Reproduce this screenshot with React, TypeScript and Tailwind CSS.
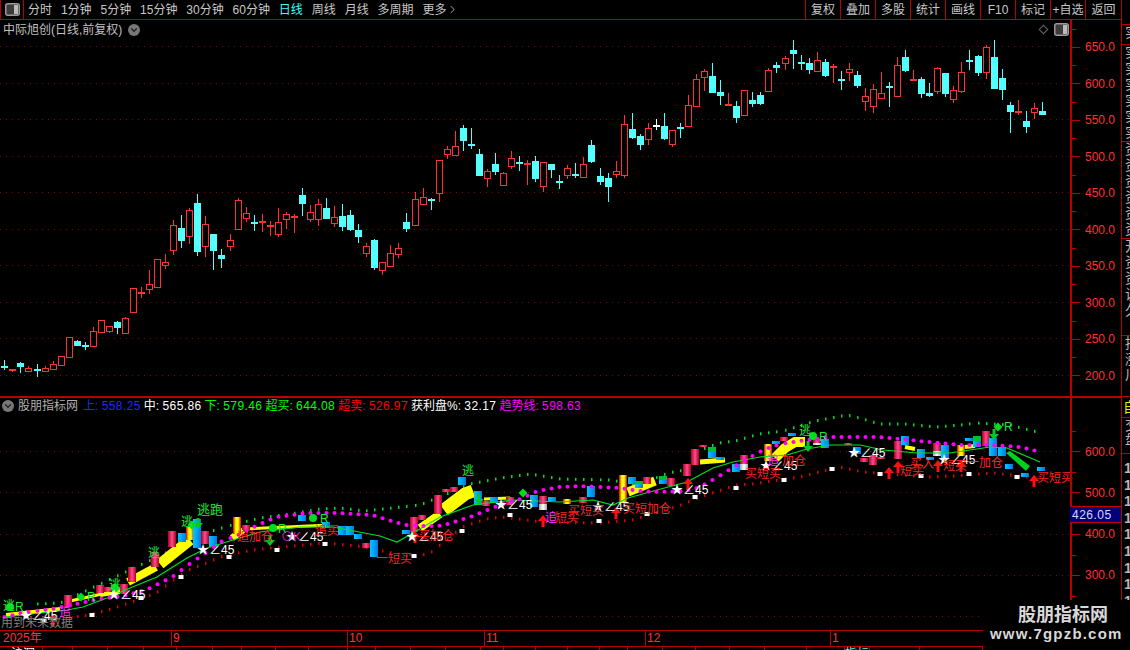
import { ChevronDown, ChevronRight } from "lucide-react";

const RED = "#ff3232";
const CYAN = "#54ffff";
const stepX = (i: number) => Math.round(4.33 + 8.043 * i) + 0.5;

type Kind = "r" | "c" | "w";
type Row = [number, number, number, number, Kind];

// [wick top, body top, body bottom, wick bottom], y read at 3x from crops
const CANDLES_A: Row[] = [
  [540, 558, 561, 570, "c"], [567, 568, 572, 576, "r"], [546, 550, 560, 578, "c"], [558, 565, 572, 573, "r"], [552, 566, 568, 590, "c"],
  [558, 565, 572, 576, "r"], [543, 553, 566, 567, "r"], [529, 529, 554, 558, "r"], [472, 472, 530, 533, "r"], [480, 484, 497, 498, "c"],
  [486, 496, 499, 510, "c"], [441, 454, 497, 501, "r"], [421, 421, 455, 455, "r"], [439, 439, 452, 459, "r"], [423, 427, 443, 461, "c"],
  [411, 415, 458, 458, "r"], [325, 325, 395, 395, "r"], [321, 337, 339, 354, "r"], [270, 313, 326, 342, "r"], [238, 238, 320, 320, "r"],
  [222, 247, 254, 267, "r"], [120, 136, 209, 225, "r"], [105, 144, 183, 204, "c"], [84, 91, 167, 192, "r"], [42, 69, 216, 228, "c"],
  [108, 133, 197, 231, "r"], [162, 162, 212, 270, "c"], [207, 225, 237, 264, "c"], [162, 181, 197, 213, "r"], [54, 61, 146, 146, "r"],
  [81, 100, 113, 126, "r"], [105, 125, 127, 153, "c"], [102, 124, 128, 156, "r"], [123, 136, 140, 168, "r"], [84, 127, 161, 171, "r"],
  [96, 103, 116, 148, "r"], [102, 109, 113, 159, "r"], [24, 45, 72, 108, "c"], [75, 97, 116, 126, "r"], [57, 73, 116, 138, "r"],
  [54, 84, 117, 117, "c"], [78, 112, 128, 141, "r"], [72, 108, 141, 153, "c"], [90, 105, 150, 153, "c"], [132, 150, 171, 189, "c"],
  [189, 199, 218, 231, "r"], [177, 180, 264, 270, "c"], [246, 247, 269, 285, "r"], [195, 220, 257, 258, "r"], [189, 205, 221, 234, "r"],
];

const CANDLES_B: Row[] = [
  [460, 486, 507, 516, "c"], [396, 418, 495, 495, "r"], [384, 412, 431, 431, "r"], [413, 416, 419, 450, "c"], [300, 300, 398, 426, "r"],
  [258, 268, 281, 297, "r"], [213, 259, 284, 284, "r"], [195, 204, 243, 273, "c"], [204, 252, 255, 267, "c"], [267, 282, 348, 348, "c"],
  [327, 334, 353, 381, "r"], [279, 312, 336, 345, "c"], [336, 340, 374, 378, "r"], [273, 295, 317, 327, "r"], [288, 306, 308, 333, "c"],
  [300, 309, 314, 375, "r"], [288, 303, 357, 366, "c"], [306, 307, 377, 396, "r"], [312, 312, 330, 354, "c"], [345, 364, 368, 387, "c"],
  [315, 325, 345, 357, "r"], [309, 342, 347, 354, "c"], [291, 313, 350, 350, "r"], [240, 255, 306, 309, "c"], [324, 348, 366, 375, "c"],
  [339, 354, 381, 426, "c"], [303, 334, 341, 354, "r"], [165, 192, 345, 354, "r"], [159, 207, 234, 237, "c"], [222, 228, 255, 270, "c"],
  [189, 205, 236, 255, "r"], [177, 195, 197, 210, "w"], [159, 198, 237, 240, "c"], [210, 211, 251, 261, "r"], [189, 202, 206, 234, "c"],
  [105, 135, 197, 201, "r"], [42, 57, 137, 137, "r"], [27, 34, 50, 93, "r"], [9, 48, 99, 99, "c"], [60, 96, 108, 135, "c"],
  [99, 132, 136, 138, "r"], [123, 138, 174, 189, "c"], [90, 91, 164, 164, "r"],
];

const CANDLES_C: Row[] = [
  [275, 300, 312, 320, "c"], [277, 285, 312, 315, "c"], [205, 210, 272, 272, "r"], [185, 195, 204, 220, "c"], [168, 175, 190, 210, "r"],
  [120, 150, 162, 207, "c"], [165, 185, 187, 210, "c"], [175, 190, 210, 222, "c"], [155, 181, 212, 215, "r"], [178, 186, 228, 230, "c"],
  [192, 198, 205, 250, "r"], [212, 237, 239, 270, "c"], [190, 208, 215, 242, "r"], [212, 225, 258, 265, "c"], [265, 287, 302, 333, "r"],
  [252, 268, 317, 340, "r"], [215, 280, 293, 295, "r"], [245, 258, 262, 320, "c"], [170, 195, 288, 290, "r"], [150, 171, 212, 215, "c"],
  [210, 238, 241, 243, "r"], [232, 237, 281, 295, "c"], [250, 279, 288, 290, "c"], [200, 205, 272, 282, "r"], [218, 220, 282, 290, "c"],
  [258, 271, 296, 310, "r"], [186, 216, 272, 278, "r"], [150, 180, 185, 210, "c"], [165, 168, 219, 228, "c"], [135, 141, 215, 237, "r"],
  [120, 171, 267, 267, "c"], [207, 234, 270, 300, "c"], [307, 315, 336, 400, "c"], [300, 333, 336, 345, "r"], [333, 363, 381, 400, "c"],
  [308, 325, 335, 358, "r"], [306, 333, 345, 345, "c"],
];

const candles = [
  ...CANDLES_A.map((r) => ({ r, y0: 180 })),
  ...CANDLES_B.map((r) => ({ r, y0: 60 })),
  ...CANDLES_C.map((r) => ({ r, y0: 0 })),
];

type Pt = [number, number];

const MAGENTA_LINE: Pt[] = [[4, 617], [28, 612], [52, 609], [76, 604], [100, 599], [124, 596], [148, 589], [172, 577], [188, 565], [204, 554], [220, 542], [236, 536], [260, 524], [276, 517], [308, 513], [340, 513], [372, 515], [388, 520], [406, 525], [422, 526], [438, 526], [448, 524], [470, 517], [500, 505], [520, 499], [538, 491], [560, 487], [580, 486], [620, 488], [640, 491], [660, 492], [685, 491], [700, 487], [716, 478], [740, 463], [763, 450], [780, 444], [800, 441], [832, 437], [880, 437], [930, 442], [960, 445], [990, 445], [1020, 447], [1041, 452]];
const GREEN_DOTS: Pt[] = [[36, 604], [60, 603], [212, 531], [228, 526], [260, 518], [290, 514], [320, 509], [340, 508], [364, 511], [420, 505], [470, 484], [501, 478], [530, 474], [560, 479], [610, 480], [638, 485], [668, 473], [690, 469], [703, 449], [719, 443], [735, 441], [759, 434], [783, 431], [815, 421], [847, 415], [863, 419], [879, 424], [904, 424], [936, 427], [960, 425], [977, 423], [993, 424], [1009, 425], [1025, 429], [1041, 433]];
const RED_DOTS: Pt[] = [[66, 618], [83, 616], [108, 610], [132, 602], [156, 593], [172, 581], [188, 570], [204, 564], [220, 557], [252, 550], [293, 546], [325, 543], [357, 546], [413, 557], [430, 553], [445, 541], [462, 527], [486, 519], [502, 517], [542, 522], [600, 523], [632, 520], [655, 513], [678, 506], [703, 496], [736, 485], [752, 484], [799, 477], [839, 467], [863, 472], [928, 477], [953, 476], [993, 473], [1025, 477], [1042, 478]];
const TREND_LINE: Pt[] = [[5, 617], [67, 610], [83, 607], [107, 598], [130, 588], [157, 577], [187, 558], [207, 548], [233, 540], [260, 532], [300, 527], [333, 527], [380, 536], [397, 542], [413, 533], [440, 517], [473, 505], [513, 500], [560, 502], [593, 500], [613, 505], [628, 498], [657, 490], [687, 482], [713, 468], [733, 462], [760, 457], [787, 455], [807, 449], [830, 445], [860, 445], [883, 450], [917, 453], [950, 453], [990, 447], [1007, 448], [1040, 462]];

const sample = (line: Pt[]): Pt[] => {
  const out: Pt[] = [];
  for (let i = 0; i < 130; i++) {
    const x = stepX(i);
    const k = line.findIndex((p) => p[0] >= x);
    if (k < 1) continue;
    const [a, b] = [line[k - 1], line[k]];
    out.push([x, a[1] + ((b[1] - a[1]) * (x - a[0])) / (b[0] - a[0])]);
  }
  return out;
};

const SQUARES: Pt[] = [[44, 621], [92, 615], [141, 598], [181, 577], [229, 557], [277, 550], [325, 544], [414, 556], [462, 531], [510, 515], [599, 521], [647, 514], [695, 497], [736, 488], [784, 480], [832, 469], [880, 474], [921, 476], [969, 474], [1017, 477]];

const STARS: Pt[] = [[25, 616], [113, 595], [202, 550], [291, 537], [411, 537], [500, 505], [597, 507], [676, 490], [765, 466], [853, 453], [943, 460]];

// x, top, bottom, kind: red / blue / yellow core / green top / white foot
type BarKind = "r" | "b" | "y" | "g" | "w";
const BARS: [number, number, number, BarKind][] = [
  [68, 595, 607, "r"], [100, 585, 593, "r"], [108, 587, 592, "r"], [124, 584, 594, "r"], [132, 567, 582, "r"], [155, 552, 567, "r"], [172, 531, 547, "r"], [182, 533, 542, "b"], [190, 527, 540, "y"], [197, 519, 548, "b"], [205, 531, 544, "r"], [213, 536, 547, "b"], [237, 517, 534, "y"], [246, 525, 530, "r"], [302, 515, 521, "b"], [326, 522, 528, "b"], [342, 526, 535, "b"], [350, 526, 535, "b"], [358, 534, 539, "b"], [366, 543, 548, "r"], [374, 540, 557, "b"],
  [414, 517, 532, "r"], [406, 530, 534, "b"], [422, 515, 520, "r"], [438, 495, 514, "r"], [446, 489, 492, "r"], [454, 487, 492, "r"], [462, 477, 485, "b"], [478, 491, 505, "b"], [486, 501, 506, "r"], [494, 497, 503, "b"], [510, 497, 505, "r"], [534, 495, 507, "b"], [543, 496, 510, "w"], [552, 497, 501, "b"], [567, 499, 504, "y"], [583, 497, 503, "r"], [591, 486, 497, "b"], [623, 475, 503, "y"], [632, 477, 484, "b"], [639, 481, 488, "g"], [647, 477, 484, "r"], [663, 476, 484, "g"], [671, 478, 486, "r"], [687, 464, 476, "r"], [695, 449, 465, "r"], [703, 445, 447, "r"], [712, 447, 458, "g"], [720, 457, 460, "b"], [736, 464, 472, "b"], [744, 455, 470, "w"],
  [768, 444, 461, "y"], [776, 441, 444, "b"], [784, 437, 441, "r"], [792, 433, 436, "b"], [817, 439, 445, "w"], [825, 439, 448, "b"], [848, 443, 445, "r"], [857, 447, 454, "b"], [864, 458, 462, "r"], [873, 455, 465, "r"], [881, 457, 459, "r"], [898, 441, 459, "r"], [905, 436, 445, "b"], [921, 449, 458, "b"], [930, 457, 460, "b"], [937, 443, 456, "w"], [945, 445, 458, "b"], [961, 445, 456, "y"], [969, 438, 441, "b"], [977, 436, 447, "g"], [986, 431, 446, "r"], [993, 438, 456, "b"], [1002, 447, 456, "b"], [1009, 464, 469, "b"], [1025, 473, 477, "b"], [1041, 467, 471, "b"],
];

// yellow band pieces: width, then points
const BANDS: [number, number[]][] = [
  [4, [6, 615, 60, 609]], [3, [70, 601, 120, 590]], [6, [100, 594, 120, 591]], [8, [128, 582, 156, 567]], [11, [160, 564, 190, 540]], [7, [232, 538, 243, 530]], [3, [245, 529, 330, 525]],
  [8, [420, 528, 440, 514]], [13, [444, 510, 465, 494, 473, 491]], [3, [484, 499, 510, 498]], [9, [628, 492, 655, 481]], [5, [700, 462, 725, 460]], [10, [775, 458, 785, 448, 795, 442, 805, 442]], [4, [905, 447, 915, 449]], [4, [965, 447, 975, 446]],
];

type Mark = { x: number; y: number; t: string; c: string; size?: number };
const GREEN = "#22e83a";
const LABELS: Mark[] = [
  { x: 3, y: 600, t: "逃", c: GREEN },
  { x: 109, y: 579, t: "逃", c: GREEN },
  { x: 148, y: 547, t: "逃", c: GREEN },
  { x: 181, y: 516, t: "逃", c: GREEN },
  { x: 197, y: 503, t: "逃跑", c: GREEN, size: 13 },
  { x: 462, y: 465, t: "逃", c: GREEN },
  { x: 799, y: 425, t: "逃", c: GREEN },
  { x: 15, y: 601, t: "R", c: GREEN },
  { x: 87, y: 591, t: "R", c: GREEN },
  { x: 278, y: 523, t: "R", c: GREEN },
  { x: 320, y: 513, t: "R", c: GREEN },
  { x: 819, y: 431, t: "R", c: GREEN },
  { x: 1004, y: 421, t: "R", c: GREEN },
  { x: 1, y: 617, t: "用到未来数据", c: "#808080" },
  { x: 59, y: 607, t: "追", c: "#ff30ff" },
  { x: 237, y: 531, t: "追加仓", c: "#ff2020" },
  { x: 281, y: 531, t: "⊙K", c: "#c030c0" },
  { x: 315, y: 525, t: "追买", c: "#ff2020" },
  { x: 376, y: 553, t: "一短买", c: "#ff2020" },
  { x: 418, y: 530, t: "买加仓", c: "#ff2020" },
  { x: 555, y: 512, t: "短买", c: "#ff2020" },
  { x: 545, y: 512, t: "追", c: "#ff30ff" },
  { x: 568, y: 505, t: "买短买", c: "#ff2020" },
  { x: 623, y: 503, t: "买短加仓", c: "#ff2020" },
  { x: 745, y: 468, t: "买短买", c: "#ff2020" },
  { x: 767, y: 455, t: "追", c: "#ff30ff" },
  { x: 782, y: 455, t: "加仓", c: "#ff2020" },
  { x: 900, y: 465, t: "短买", c: "#ff2020" },
  { x: 910, y: 458, t: "买入", c: "#ff2020" },
  { x: 943, y: 460, t: "短买", c: "#ff2020" },
  { x: 967, y: 457, t: "一加仓", c: "#ff2020" },
  { x: 1037, y: 472, t: "买短买", c: "#ff2020" },
];

const UP_ARROWS: Pt[] = [[53, 614], [415, 531], [543, 515], [616, 507], [688, 478], [889, 467], [898, 461], [938, 460], [961, 460], [1034, 475]];
const DOWN_ARROWS: Pt[] = [[198, 518], [270, 535], [479, 494], [808, 441], [994, 429]];
const GREEN_BLOBS: Pt[] = [[10, 607], [115, 588], [273, 528], [313, 518], [813, 436]];
const GREEN_DIAMONDS: Pt[] = [[81, 597], [192, 525], [523, 493], [998, 427]];

const TOOL_TABS = ["分时", "1分钟", "5分钟", "15分钟", "30分钟", "60分钟", "日线", "周线", "月线", "多周期"];
const TOOL_BTNS = ["复权", "叠加", "多股", "统计", "画线", "F10", "标记", "+自选", "返回"];

const STATS = [
  { label: "上:", value: "558.25", c: "text-[#1c28ff]" },
  { label: "中:", value: "565.86", c: "text-white" },
  { label: "下:", value: "579.46", c: "text-[#00ff00]" },
  { label: "超买:", value: "644.08", c: "text-[#00ff00]" },
  { label: "超卖:", value: "526.97", c: "text-[#ff0000]" },
  { label: "获利盘%:", value: "32.17", c: "text-white" },
  { label: "趋势线:", value: "598.63", c: "text-[#ff00ff]" },
];

const STRIP = [
  { h: "h-[25px]", t: "" },
  { h: "h-[20px]", t: "实" },
  { h: "h-[97px]", t: "实实实实实实" },
  { h: "h-[97px]", t: "资资资资资资" },
  { h: "h-[97px]", t: "开资资说久" },
  { h: "h-[61px]", t: "持涨川" },
];

const TAB_STOPS = [43, 73, 108, 144, 177, 213, 242, 276, 309, 348, 376, 411, 446, 481, 504, 536, 568, 600, 628, 663, 696, 730, 765, 807, 845, 870, 920, 983];

function PanelIcon() {
  return (
    <svg width="15" height="13" viewBox="0 0 15 13" className="shrink-0">
      <rect x="0.75" y="0.75" width="13.5" height="11.5" rx="2" fill="#3c3c3c" stroke="#999" strokeWidth="1.5" />
      <rect x="9" y="2" width="4" height="9" fill="#bbb" />
    </svg>
  );
}

function RoundChevron({ className }: { className?: string }) {
  return (
    <span className={`flex h-3 w-3 shrink-0 items-center justify-center rounded-full bg-[#777] ${className ?? ""}`}>
      <ChevronDown size={10} strokeWidth={3} color="#222" />
    </span>
  );
}

function DottedGrid({ ys }: { ys: number[] }) {
  return (
    <>
      {ys.map((y) => (
        <line key={y} x1="0" x2="1070" y1={y} y2={y} stroke="#8c0000" strokeDasharray="1 5" />
      ))}
    </>
  );
}

function Candles() {
  return (
    <>
      {candles.map(({ r, y0 }, i) => {
        const [wt, bt, bb, wb, kind] = r;
        const x = stepX(i);
        const y = (v: number) => Math.round(y0 + v / 3);
        const color = kind === "r" ? RED : kind === "c" ? CYAN : "#ffffff";
        const flat = y(bb) - y(bt) <= 2;
        return (
          <g key={i} shapeRendering="crispEdges">
            <line x1={x} x2={x} y1={y(wt)} y2={y(bt)} stroke={color} />
            <line x1={x} x2={x} y1={y(bb)} y2={y(wb)} stroke={color} />
            {flat ? (
              <rect x={x - 3.5} y={y(bt)} width="7" height="2" fill={color} />
            ) : kind === "r" ? (
              <rect x={x - 3} y={y(bt) + 0.5} width="6" height={y(bb) - y(bt)} fill="#000" stroke={color} />
            ) : (
              <rect x={x - 3.5} y={y(bt)} width="7" height={y(bb) - y(bt)} fill={color} />
            )}
          </g>
        );
      })}
    </>
  );
}

function Bar({ x, top, bottom, kind }: { x: number; top: number; bottom: number; kind: BarKind }) {
  const base = { x: x - 4, width: 8, shapeRendering: "crispEdges" as const };
  const h = bottom - top;
  if (kind === "g")
    return (
      <>
        <rect {...base} y={top} height={h * 0.45} fill="#00c030" />
        <rect {...base} y={top + h * 0.45} height={h * 0.55} fill="url(#blueBar)" />
      </>
    );
  if (kind === "w")
    return (
      <>
        <rect {...base} y={top} height={h * 0.6} fill="url(#redBar)" />
        <rect {...base} y={top + h * 0.6} height={h * 0.4} fill="url(#whiteBar)" />
      </>
    );
  const fill = kind === "r" ? "url(#redBar)" : kind === "b" ? "url(#blueBar)" : "url(#yellowBar)";
  return <rect {...base} y={top} height={h} fill={fill} />;
}

function IndicatorDrawing() {
  return (
    <svg width="1070" height="232" viewBox="0 398 1070 232" className="block">
      <defs>
        <linearGradient id="redBar">
          <stop offset="0" stopColor="#b00018" />
          <stop offset="0.5" stopColor="#ff4a98" />
          <stop offset="1" stopColor="#b00018" />
        </linearGradient>
        <linearGradient id="blueBar">
          <stop offset="0" stopColor="#00c8ff" />
          <stop offset="1" stopColor="#0078e8" />
        </linearGradient>
        <linearGradient id="yellowBar">
          <stop offset="0" stopColor="#d00010" />
          <stop offset="0.35" stopColor="#ffff00" />
          <stop offset="0.65" stopColor="#ffff00" />
          <stop offset="1" stopColor="#d00010" />
        </linearGradient>
        <linearGradient id="whiteBar">
          <stop offset="0" stopColor="#a8a8a8" />
          <stop offset="0.5" stopColor="#ffffff" />
          <stop offset="1" stopColor="#a8a8a8" />
        </linearGradient>
      </defs>
      <DottedGrid ys={[451.5, 492.5, 534.5, 575.5, 616.5]} />
      {sample(GREEN_DOTS).map(([x, y]) => (
        <rect key={x} x={x - 0.5} y={y - 1.5} width="1.5" height="3" fill="#00e020" />
      ))}
      {sample(RED_DOTS).map(([x, y]) => (
        <rect key={x} x={x - 0.5} y={y - 1.5} width="1.5" height="3" fill="#e00000" />
      ))}
      {BANDS.map(([w, pts], i) => (
        <polyline key={i} points={pts.join(" ")} fill="none" stroke="#ffff00" strokeWidth={w} />
      ))}
      {BARS.map(([x, top, bottom, kind], i) => (
        <Bar key={i} x={x} top={top} bottom={bottom} kind={kind} />
      ))}
      <polyline points={TREND_LINE.flat().join(" ")} fill="none" stroke="#00e020" strokeWidth="1.2" />
      <polygon points="1006,453 1010,451 1030,466 1026,471" fill="#00d020" />
      {sample(MAGENTA_LINE).map(([x, y]) => (
        <circle key={x} cx={x} cy={y} r="2" fill="#ff00ff" />
      ))}
      {SQUARES.map(([x, y]) => (
        <rect key={x} x={x - 2.5} y={y - 2} width="5" height="4" fill="#fff" />
      ))}
      {UP_ARROWS.map(([x, y]) => (
        <path key={x} d={`M${x} ${y} l5 6 h-3.5 v6 h-3 v-6 h-3.5 z`} fill="#ff1010" />
      ))}
      {DOWN_ARROWS.map(([x, y]) => (
        <path key={x} d={`M${x - 1.5} ${y} h3 v5 h3.5 l-5 6 l-5 -6 h3.5 z`} fill="#00c828" />
      ))}
      {GREEN_BLOBS.map(([x, y]) => (
        <circle key={x} cx={x} cy={y} r="4" fill="#00dd20" />
      ))}
      {GREEN_DIAMONDS.map(([x, y]) => (
        <path key={x} d={`M${x} ${y - 4.5} l4.5 4.5 l-4.5 4.5 l-4.5 -4.5 z`} fill="#00dd20" />
      ))}
    </svg>
  );
}

function PriceAxis({ values, rowH, top, pad }: { values: number[]; rowH: string; top: string; pad: string }) {
  return (
    <div className={`h-full w-[51px] shrink-0 overflow-hidden border-l-2 border-[#b80000] ${top}`}>
      {values.map((v) => (
        <div key={v} className={`relative flex items-center justify-between ${rowH} ${pad}`}>
          <span className="h-px w-2 bg-[#c00000]" />
          <span className="absolute left-0 top-0 h-px w-1 bg-[#c00000]" />
          <span className="text-[12px] leading-none text-[#ff3232]">{v.toFixed(1)}</span>
        </div>
      ))}
    </div>
  );
}

export default function App() {
  return (
    <div className="relative flex h-[650px] w-[1130px] overflow-hidden bg-black font-['Liberation_Sans','Noto_Sans_CJK_SC',sans-serif] text-[12px] text-[#c8c8c8]">
      <div className="flex w-[1122px] shrink-0 flex-col border-r border-[#b80000]">
        {/* toolbar */}
        <div className="flex h-[20px] shrink-0 items-center border-b border-[#b80000]">
          <div className="flex h-full w-[24px] items-center justify-center border-x border-[#b80000]">
            <PanelIcon />
          </div>
          <div className="flex items-center gap-[8.9px] pl-1">
            {TOOL_TABS.map((t) => (
              <span key={t} className={t === "日线" ? "text-[#3fffff]" : ""}>
                {t}
              </span>
            ))}
            <span className="flex items-center">
              更多
              <ChevronRight size={13} strokeWidth={1.5} />
            </span>
          </div>
          <div className="ml-auto flex h-full">
            {TOOL_BTNS.map((b) => (
              <span key={b} className="flex h-full w-[35px] items-center justify-center border-l border-[#b80000] last:w-[36px]">
                {b}
              </span>
            ))}
          </div>
        </div>

        {/* candlestick panel */}
        <div className="flex h-[378px] shrink-0 border-b-2 border-[#b80000]">
          <div className="relative w-[1070px]">
            <svg width="1070" height="376" viewBox="0 20 1070 376" className="block">
              <DottedGrid ys={[46.5, 83.5, 119.5, 156.5, 192.5, 229.5, 265.5, 302.5, 338.5, 375.5]} />
              <Candles />
            </svg>
            <div className="absolute left-[3px] top-[2px] flex items-center gap-[6px]">
              <span className="text-[12px] leading-[16px] text-[#c0c0c0]">中际旭创(日线,前复权)</span>
              <RoundChevron />
            </div>
            <div className="absolute right-[1px] top-[3px] flex items-center gap-[7px]">
              <span className="h-[7px] w-[7px] rotate-45 border border-[#666]" />
              <PanelIcon />
            </div>
          </div>
          <PriceAxis values={[650, 600, 550, 500, 450, 400, 350, 300, 250, 200]} rowH="h-[36.5px]" top="pt-[8.75px]" pad="pr-[6px]" />
        </div>

        {/* indicator panel */}
        <div className="flex h-[232px] shrink-0">
          <div className="relative w-[1070px]">
            <IndicatorDrawing />
            <div className="absolute left-[2px] top-[1px] flex items-center gap-[3px] whitespace-nowrap leading-[14px]">
              <RoundChevron />
              <span className="ml-px mr-[2px] text-[#b0b0b0]">股朋指标网</span>
              {STATS.map((s) => (
                <span key={s.label} className={`${s.c} whitespace-nowrap`}>
                  {s.label} <span className="tracking-[0.4px]">{s.value}</span>
                </span>
              ))}
            </div>
            {STARS.map(([x, y]) => (
              <span key={x} className="absolute whitespace-nowrap leading-[14px] text-white" style={{ left: x - 5, top: y - 398 - 7 }}>
                ★∠45
              </span>
            ))}
            {LABELS.map((l) => (
              <span
                key={`${l.x}-${l.t}`}
                className="absolute whitespace-nowrap leading-none"
                style={{ left: l.x, top: l.y - 398, color: l.c, fontSize: l.size ?? 12 }}
              >
                {l.t}
              </span>
            ))}
          </div>
          <div className="relative">
            <PriceAxis values={[600, 500, 400, 300, 200]} rowH="h-[41.25px]" top="pt-[33px]" pad="pr-[6px]" />
            <div className="absolute inset-x-0 top-[108px] flex h-[17px] items-center border-y border-[#c00000] bg-[#00007c] pl-[2px] text-[12px] tracking-[0.5px] text-[#d8d8ff]">
              426.05
            </div>
          </div>
        </div>

        {/* date axis */}
        <div className="flex h-[17px] shrink-0 border-y border-[#b80000] text-[12px] leading-[15px] text-[#ff3232]">
          <span className="w-[172px] border-r border-[#b80000] pl-[3px]">2025年</span>
          <span className="w-[176px] border-r border-[#b80000] pl-[1px]">9</span>
          <span className="w-[137px] border-r border-[#b80000] pl-[1px]">10</span>
          <span className="w-[161px] border-r border-[#b80000] pl-[1px]">11</span>
          <span className="w-[185px] border-r border-[#b80000] pl-[1px]">12</span>
          <span className="pl-[1px]">1</span>
        </div>

        {/* tab strip, only the top edge is in frame */}
        <div className="flex h-[3px] overflow-hidden leading-[14px]">
          {TAB_STOPS.map((stop, i) => (
            <span
              key={stop}
              className={`shrink-0 overflow-hidden border-r border-[#b80000] ${i === 0 ? "pl-[11px] text-white" : ""} ${stop === 870 ? "text-[#3fffff]" : ""}`}
              style={{ width: stop - (TAB_STOPS[i - 1] ?? 0) }}
            >
              {i === 0 ? "沪深" : stop === 870 ? "指标" : ""}
            </span>
          ))}
        </div>
      </div>

      {/* clipped right-hand column */}
      <div className="flex w-[8px] shrink-0 flex-col overflow-hidden text-[14px] text-[#b8b8b8]">
        {STRIP.map((s, i) => (
          <div key={i} className={`${s.h} shrink-0 border-b border-[#b80000] pl-px`}>
            <span className="block w-[16px] leading-[16px] tracking-[2px] [writing-mode:vertical-rl]">{s.t}</span>
          </div>
        ))}
        <div className="h-[21px] shrink-0 border-b border-[#b80000] pl-px leading-[20px] text-[#e8e800]">
          <span className="block w-[16px]">自</span>
        </div>
        <div className="h-[36px] shrink-0 border-b border-[#b80000] pl-px">
          <span className="block w-[16px] leading-[16px] [writing-mode:vertical-rl]">交盘</span>
        </div>
        <div className="flex flex-col pl-[2px] pt-[6px] text-[14px] font-bold leading-[16.6px]">
          {[0, 1, 2, 3, 4, 5, 6, 7, 8].map((n) => (
            <span key={n}>1</span>
          ))}
        </div>
      </div>

      {/* watermark */}
      <div className="absolute left-[983px] top-[600px] flex h-[50px] w-[147px] flex-col items-start bg-black pt-[4px] text-[#d8d8d8]">
        <span className="ml-[35px] text-[18px] font-bold leading-[22px]">股朋指标网</span>
        <span className="ml-[7px] whitespace-nowrap text-[15px] font-bold leading-[16px] tracking-[1.2px]">www.7gpzb.com</span>
      </div>
    </div>
  );
}
